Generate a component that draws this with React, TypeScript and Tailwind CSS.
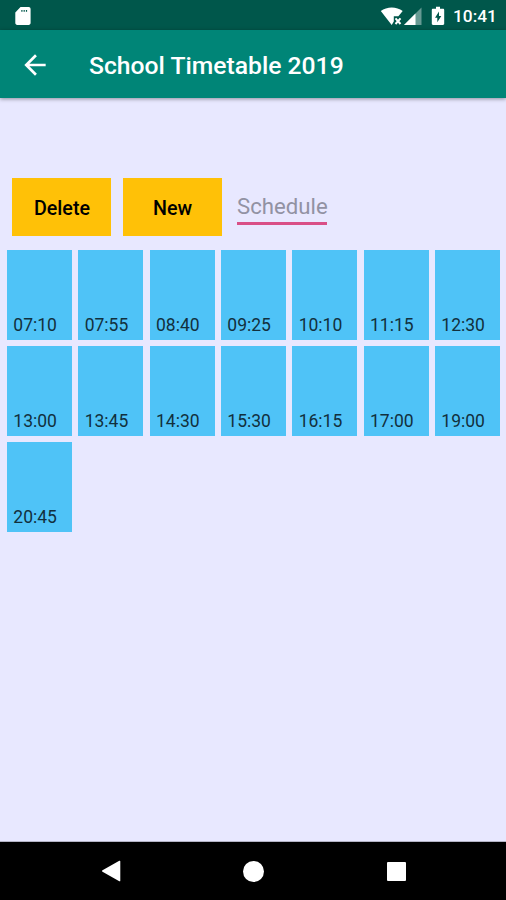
const times = [
  '07:10', '07:55', '08:40', '09:25', '10:10', '11:15', '12:30',
  '13:00', '13:45', '14:30', '15:30', '16:15', '17:00', '19:00',
  '20:45',
];

function StatusBar() {
  return (
    <div className="flex h-[30px] items-center bg-[#00574b] pr-[9px] pl-[14px] text-white">
      <svg className="mt-px h-[20px] w-[18px]" viewBox="0 0 18 20" fill="currentColor">
        <path
          fillRule="evenodd"
          d="M6.500 1h8.200c1.100 0 1.900.8 1.900 1.900v14.200c0 1.100-.8 1.900-1.900 1.900H3.200c-1.100 0-1.900-.8-1.900-1.900V6.400zM7.300 4v1.700h1.200V4zM9.600 4v1.700h1.200V4zM11.900 4v1.700h1.200V4z"
        />
      </svg>
      <svg className="mt-px ml-auto h-[20px] w-[23px]" viewBox="0 0 23 20" fill="currentColor">
        <path d="M0.800 5C6.800.2 16.700.2 22.700 5l-4.300 5.200h-4.600v5.300L11.700 19z" />
        <path d="m15.500 12.300 5 5.700m0-5.700-5 5.700" fill="none" stroke="currentColor" strokeWidth="2" />
      </svg>
      <svg className="mt-px ml-px h-[20px] w-[18px]" viewBox="0 0 18 20" fill="currentColor">
        <path d="M17.500 1.500V19H0z" opacity=".4" />
        <path d="M11.500 7.500V19H0z" />
      </svg>
      <svg className="mt-px ml-[9px] h-[20px] w-[14px]" viewBox="0 0 14 20" fill="currentColor">
        <path
          fillRule="evenodd"
          d="M5 .8h4v1.900h3c.7 0 1.200.5 1.200 1.200v13.900c0 .7-.5 1.200-1.200 1.200H2c-.7 0-1.200-.5-1.200-1.200V3.900c0-.7.5-1.200 1.200-1.200h3zM8 5.500l-4 6.200h2.300v4.600l4-6.300H8z"
        />
      </svg>
      <span className="mt-[2px] ml-[8px] w-[44px] text-[17.300px] leading-[30px] font-medium whitespace-nowrap">10:41</span>
    </div>
  );
}

function AppBar() {
  return (
    <header className="z-10 flex h-[68px] items-center bg-[#008577] text-white shadow-[0_1px_4px_rgba(0,0,0,0.4)]">
      <svg className="mt-px ml-[19px] h-[32px] w-[32px]" viewBox="0 0 24 24" fill="currentColor">
        <path d="M20 11H7.830l5.590-5.590L12 4l-8 8 8 8 1.410-1.410L7.830 13H20v-2z" />
      </svg>
      <h1 className="mt-[3px] ml-[38px] text-[24.700px] leading-[30px] font-medium whitespace-nowrap">School Timetable 2019</h1>
    </header>
  );
}

function NavBar() {
  return (
    <nav className="flex h-[58px] items-center bg-black pl-[101px] text-white">
      <svg className="h-[22px] w-[20px]" viewBox="0 0 20 22" fill="currentColor">
        <path d="M18.300.8c.5-.3 1-.1 1 .5v19.400c0 .6-.5.8-1 .5L1.500 11.800c-.6-.4-.6-1.200 0-1.600z" />
      </svg>
      <div className="ml-[122px] h-[21px] w-[21px] rounded-full bg-white" />
      <div className="ml-[123px] h-[19px] w-[19px] rounded-[1px] bg-white" />
    </nav>
  );
}

export default function App() {
  return (
    <div className="flex h-[900px] w-[506px] flex-col overflow-hidden bg-[#e8e8ff] font-[Roboto,sans-serif]">
      <StatusBar />
      <AppBar />

      <main className="flex-1 border-b border-[#b4b4c6] pt-[80px]">
        <div className="flex pl-[12px]">
          <button className="h-[58px] w-[99px] bg-[#ffc107] pt-[4px] pl-px text-[19.700px] font-medium text-black">Delete</button>
          <button className="ml-[12px] h-[58px] w-[99px] bg-[#ffc107] pt-[4px] text-[19.700px] font-medium text-black">New</button>
          <div className="mt-[13px] ml-[15px] h-[34px] w-[90px] border-b-[3px] border-[#d94f87] text-[22.200px] leading-[31px] whitespace-nowrap text-[#9292a3]">
            Schedule
          </div>
        </div>

        <div className="mt-[13.5px] grid grid-cols-[repeat(7,65px)] gap-x-[6.350px] gap-y-[6.300px] pl-[7px]">
          {times.map((time) => (
            <div
              key={time}
              className="flex h-[90px] items-end bg-[#4fc3f7] pb-[3.700px] pl-[6.300px] text-[17.500px] leading-[22px] text-[#12303d]"
            >
              {time}
            </div>
          ))}
        </div>
      </main>

      <NavBar />
    </div>
  );
}
